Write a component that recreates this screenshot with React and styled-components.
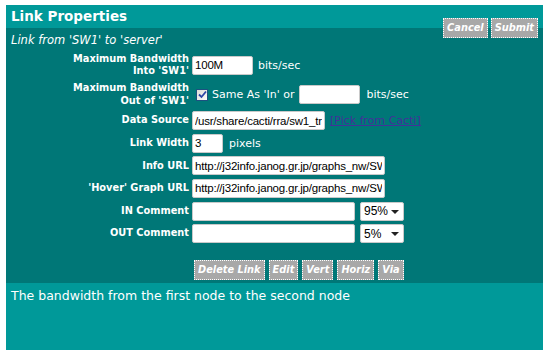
import React from 'react';
import styled, { createGlobalStyle } from 'styled-components';

const Global = createGlobalStyle`
  body {
    margin: 0;
    background: #ffffff;
    font-family: "DejaVu Sans", Verdana, sans-serif;
  }
`;

const Page = styled.div`
  width: 549px;
  height: 354px;
  padding: 5px 6px;
  box-sizing: border-box;
  background: #fff;
`;

const Dialog = styled.div`
  width: 537px;
  height: 345px;
  display: flex;
  flex-direction: column;
  color: #fff;
`;

const TitleBar = styled.div`
  height: 23px;
  background: #009999;
  padding-left: 5px;
  font-weight: bold;
  font-size: 13.5px;
  line-height: 23px;
`;

const Body = styled.div`
  background: #007777;
  padding-bottom: 3px;
`;

const HeadRow = styled.div`
  display: flex;
  justify-content: space-between;
  align-items: flex-start;
`;

const Subtitle = styled.div`
  margin-top: 4px;
  padding-left: 5px;
  font-style: italic;
  font-size: 11.5px;
  line-height: 16px;
`;

const ButtonGroup = styled.div`
  display: flex;
  gap: ${p => p.$gap || 3}px;
  margin-top: ${p => p.$top || 0}px;
  margin-right: ${p => p.$right || 0}px;
`;

const Btn = styled.button`
  height: 20px;
  padding: 0 3px;
  background: #a8a8a8;
  border: 1px dotted #fff;
  color: #fff;
  font-family: "DejaVu Sans", Verdana, sans-serif;
  font-weight: bold;
  font-style: italic;
  font-size: 9.8px;
  line-height: 18px;
`;

const Form = styled.div`
  display: grid;
  grid-template-columns: 183px 1fr;
  column-gap: 3px;
  row-gap: 3.6px;
  margin-top: 4px;
`;

const Label = styled.div`
  text-align: right;
  font-weight: bold;
  font-size: 9.8px;
  line-height: 12.5px;
  height: ${p => (p.$tall ? 26 : 19)}px;
  display: flex;
  flex-direction: column;
  justify-content: center;
  align-items: flex-end;
  white-space: nowrap;
`;

const Field = styled.div`
  display: flex;
  align-items: center;
  font-size: 11px;
  height: ${p => (p.$tall ? 26 : 19)}px;
`;

const TextBox = styled.input`
  box-sizing: border-box;
  width: ${p => p.$w}px;
  height: 19px;
  margin: ${p => p.$m || '0'};
  padding: 0 2px;
  border: 1px solid #c9c9c9;
  border-radius: 2px;
  background: #fff;
  color: #000;
  font-family: "Liberation Sans", Arial, sans-serif;
  font-size: 11.5px;
  letter-spacing: -0.2px;
  outline: none;
`;

const Unit = styled.span`
  margin-left: ${p => p.$ml || 5}px;
  white-space: nowrap;
`;

const Check = styled.span`
  width: 12px;
  height: 12px;
  box-sizing: border-box;
  margin: 0 4px 0 4px;
  border: 1px solid #1c5180;
  background: linear-gradient(135deg, #dcdcd6, #fbfbf9);
  display: inline-flex;
  align-items: center;
  justify-content: center;
`;

const PickLink = styled.a`
  margin-left: 5px;
  color: #43309a;
  text-decoration: underline;
  white-space: nowrap;
`;

const SelectWrap = styled.div`
  position: relative;
  margin-left: 5px;
`;

const Select = styled.select`
  appearance: none;
  box-sizing: border-box;
  width: 44px;
  height: 19px;
  padding: 0 0 0 3px;
  border: 1px solid #c9c9c9;
  border-radius: 2px;
  background: #fff;
  color: #000;
  font-family: "Liberation Sans", Arial, sans-serif;
  font-size: 12px;
  outline: none;
`;

const Arrow = styled.span`
  position: absolute;
  right: 5px;
  top: 8px;
  width: 0;
  height: 0;
  border-left: 4px solid transparent;
  border-right: 4px solid transparent;
  border-top: 4px solid #222;
  pointer-events: none;
`;

const ActionRow = styled.div`
  margin: 17px 0 0 188px;
`;

const Footer = styled.div`
  flex: 1;
  background: #009999;
  padding: 5px 5px 0;
  font-size: 12.5px;
  line-height: 16px;
`;

function Dropdown({ value }) {
  return (
    <SelectWrap>
      <Select defaultValue={value}>
        <option>95%</option>
        <option>5%</option>
        <option>50%</option>
      </Select>
      <Arrow />
    </SelectWrap>
  );
}

export default function App() {
  return (
    <Page>
      <Global />
      <Dialog>
        <TitleBar>Link Properties</TitleBar>
        <Body>
          <HeadRow>
            <Subtitle>Link from 'SW1' to 'server'</Subtitle>
            <ButtonGroup $top={-10} $right={5}>
              <Btn>Cancel</Btn>
              <Btn>Submit</Btn>
            </ButtonGroup>
          </HeadRow>
          <Form>
            <Label $tall>
              <span>Maximum Bandwidth</span>
              <span>Into 'SW1'</span>
            </Label>
            <Field $tall>
              <TextBox $w={61} defaultValue="100M" />
              <Unit>bits/sec</Unit>
            </Field>

            <Label $tall>
              <span>Maximum Bandwidth</span>
              <span>Out of 'SW1'</span>
            </Label>
            <Field $tall>
              <Check>
                <svg width="9" height="9" viewBox="0 0 9 9">
                  <path d="M1 4.5 L3.5 7 L8 1.5" fill="none" stroke="#2c45a6" strokeWidth="1.8" />
                </svg>
              </Check>
              <span>Same As 'In' or</span>
              <TextBox $w={61} $m="0 0 0 5px" />
              <Unit $ml={6}>bits/sec</Unit>
            </Field>

            <Label>Data Source</Label>
            <Field>
              <TextBox $w={133} defaultValue="/usr/share/cacti/rra/sw1_traffic_in_20.rrd" />
              <PickLink href="#">[Pick from Cacti]</PickLink>
            </Field>

            <Label>Link Width</Label>
            <Field>
              <TextBox $w={31} defaultValue="3" />
              <Unit $ml={6}>pixels</Unit>
            </Field>

            <Label>Info URL</Label>
            <Field>
              <TextBox $w={193} defaultValue="http://j32info.janog.gr.jp/graphs_nw/SW1.html" />
            </Field>

            <Label>'Hover' Graph URL</Label>
            <Field>
              <TextBox $w={193} defaultValue="http://j32info.janog.gr.jp/graphs_nw/SW1.png" />
            </Field>

            <Label>IN Comment</Label>
            <Field>
              <TextBox $w={163} />
              <Dropdown value="95%" />
            </Field>

            <Label>OUT Comment</Label>
            <Field>
              <TextBox $w={163} />
              <Dropdown value="5%" />
            </Field>
          </Form>
          <ActionRow>
            <ButtonGroup $gap={4}>
              <Btn>Delete Link</Btn>
              <Btn>Edit</Btn>
              <Btn>Vert</Btn>
              <Btn>Horiz</Btn>
              <Btn>Via</Btn>
            </ButtonGroup>
          </ActionRow>
        </Body>
        <Footer>The bandwidth from the first node to the second node</Footer>
      </Dialog>
    </Page>
  );
}
